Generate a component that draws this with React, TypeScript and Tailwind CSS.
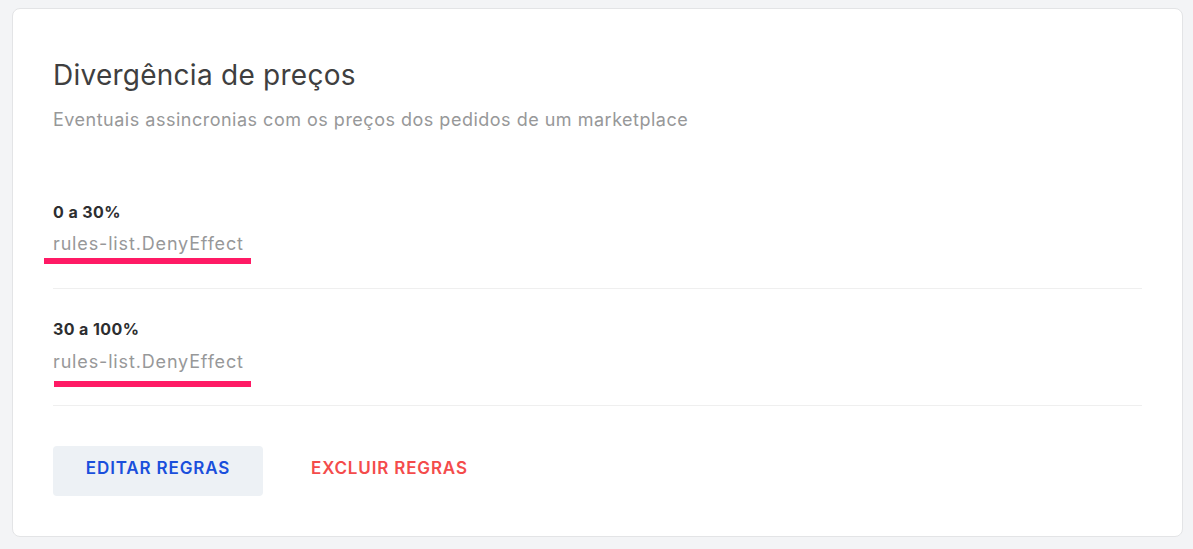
const rules = [
  { label: '0 a 30%', effect: 'rules-list.DenyEffect', barOffset: '-ml-[9px] w-[207px]', first: true },
  { label: '30 a 100%', effect: 'rules-list.DenyEffect', barOffset: 'ml-[1px] w-[197px]', first: false },
]

const App = () => (
  <div className="min-h-screen bg-[#f3f4f6] pt-2 pl-3 pr-[10px] pb-3 font-['Inter','Noto_Sans',sans-serif]">
    <div className="rounded-lg border border-[#e3e4e6] bg-white px-10 pt-12 pb-10">
      <h1 className="text-[28px] leading-[36px] font-normal tracking-[0.25px] text-[#3f3f40]">Divergência de preços</h1>
      <p className="mt-[13px] text-[18px] leading-[28px] tracking-[0.5px] text-[#979899]">
        Eventuais assincronias com os preços dos pedidos de um marketplace
      </p>

      <div className="mt-[66px]">
        {rules.map((r) => (
          <div key={r.label} className={r.first ? '' : 'pt-[28px]'}>
            <div className="text-[16px] leading-[24px] font-bold tracking-[0.4px] text-[#2d2e30]">{r.label}</div>
            <div className={`${r.first ? 'mt-[6px]' : 'mt-[7px]'} text-[18px] leading-[28px] tracking-[0.85px] text-[#979899]`}>
              {r.effect}
            </div>
            <div className={`${r.first ? '' : 'mt-[5px]'} h-[6px] bg-[#ff1a65] ${r.barOffset}`} />
            <div className={`${r.first ? 'mt-[24px]' : 'mt-[18px]'} h-px bg-[#efefef]`} />
          </div>
        ))}
      </div>

      <div className="mt-10 flex items-center gap-[15px]">
        <button className="h-[50px] w-[210px] rounded-[4px] bg-[#edf1f5] pb-[4px] text-[17px] font-semibold tracking-[0.85px] text-[#1a4fdc]">
          EDITAR REGRAS
        </button>
        <button className="h-[50px] rounded-[4px] px-[33px] pb-[4px] text-[17px] font-semibold tracking-[0.85px] text-[#f44b4b]">
          EXCLUIR REGRAS
        </button>
      </div>
    </div>
  </div>
)

export default App
